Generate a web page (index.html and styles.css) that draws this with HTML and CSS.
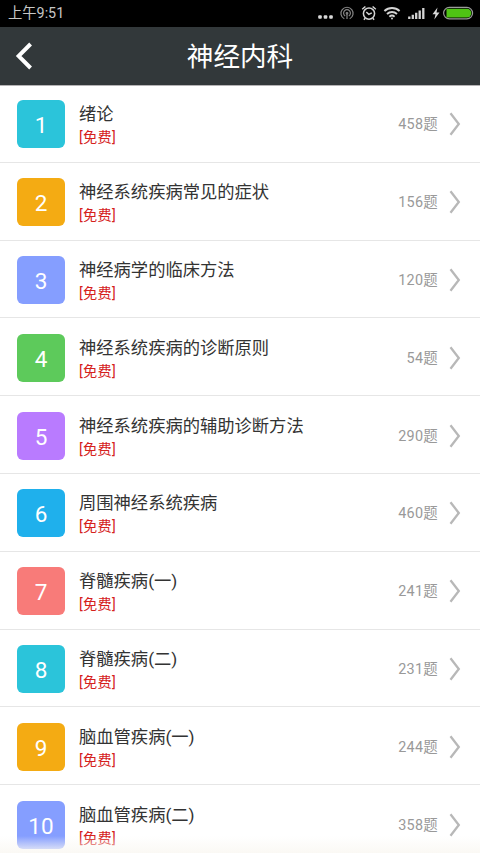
FILE: index.html
```html
<!DOCTYPE html>
<html lang="zh-CN">
<head>
<meta charset="utf-8">
<title>神经内科</title>
<link rel="stylesheet" href="styles.css">
</head>
<body>
<div class="status">
  <span class="time">上午9:51</span>
  <svg class="status-icons" width="164" height="27" viewBox="0 0 164 27" fill="none" stroke="#d4d4d4">
    <g fill="#d8d8d8" stroke="none"><rect x="2.2" y="15.3" width="3.6" height="3.4" rx="1"/><rect x="7.7" y="15.3" width="3.6" height="3.4" rx="1"/><rect x="13.2" y="15.3" width="3.6" height="3.4" rx="1"/></g>
    <g stroke="#858585" stroke-width="1.2"><path d="M28.3 18.8a6.1 6.1 0 1 1 5.4 0"/><path d="M29.2 16a3.4 3.4 0 1 1 3.6 0"/><circle cx="31" cy="13.3" r=".8"/><path d="M31 14v5"/></g>
    <g stroke-width="1.5"><circle cx="53" cy="13.6" r="5.6"/><path d="M50.3 12l2.5 2.4 3-1.6M46.2 9.2l3.2-2.7M59.8 9.2l-3.2-2.7M49.2 18.2l-1.3 1.6M56.8 18.2l1.3 1.6"/></g>
    <g stroke-width="1.9"><path d="M68.4 11a11.2 11.2 0 0 1 15.2 0M71 14a7.4 7.4 0 0 1 10 0M73.4 16.7a4 4 0 0 1 5.2 0"/><circle cx="76" cy="18.6" r="1" fill="#d4d4d4" stroke="none"/></g>
    <path stroke-width="2.3" d="M93.3 19v-2.6M96.8 19v-4.3M100.2 19v-6.2M103.7 19v-8.5M107.3 19V8"/>
    <path fill="#d8d8d8" stroke="none" d="M121.5 7.5l-5 6.7h3l-1.2 5.4 5.2-7h-3z"/>
    <rect x="127.6" y="7.4" width="29" height="11.4" rx="5.7" stroke="#9b9b9b" stroke-width="1.2"/>
    <path fill="#4fc414" stroke="none" d="M130.5 8.8H151a4.3 4.3 0 0 1 0 8.6H130.5z"/>
  </svg>
</div>
<header class="header">
  <svg class="back" width="18" height="28" viewBox="0 0 18 28"><path d="M16.6 2L4.6 14l12 12" fill="none" stroke="#fff" stroke-width="3.9"/></svg>
  <h1>神经内科</h1>
</header>
<ul class="list" id="list"></ul>
<div class="fade"></div>
<script src="app.js"></script>
</body>
</html>
```
FILE: styles.css
```css
* { box-sizing: border-box; }
body {
  margin: 0;
  height: 853px;
  overflow: hidden;
  display: flex;
  flex-direction: column;
  position: relative;
  background: #fff;
  font-family: Roboto, "Noto Sans CJK SC", sans-serif;
}
.status {
  flex: none;
  height: 27px;
  background: #000;
  display: flex;
  align-items: center;
  justify-content: space-between;
  padding: 0 0 0 8px;
}
.time {
  color: #c6c6c6;
  font: 14.3px/27px Roboto, "Noto Sans CJK SC", sans-serif;
}
.header {
  flex: none;
  height: 58px;
  background: #32383a;
  display: grid;
  grid-template-columns: 80px 1fr 80px;
  align-items: center;
}
.back { margin-left: 14px; }
h1 {
  margin: 0;
  padding-bottom: 2px;
  color: #fff;
  text-align: center;
  font: 400 26.6px/56px "Noto Sans CJK SC", sans-serif;
}
.list {
  flex: none;
  list-style: none;
  margin: 0;
  padding: 0;
  box-shadow: inset 0 1px #b5b3b5;
}
.row {
  height: 77.8px;
  padding: 2px 19px 0 17px;
  display: flex;
  align-items: center;
  border-bottom: 1px solid #e6e6e6;
}
.tile {
  width: 48px;
  height: 48px;
  flex: none;
  border-radius: 6px;
  color: #fff;
  font-size: 22.5px;
  font-weight: 400;
  line-height: 51px;
  text-align: center;
}
.cyan { background: #2bc4da; }
.orange { background: #f4ab13; }
.indigo { background: #859eff; }
.green { background: #5dca5b; }
.purple { background: #b97bff; }
.blue { background: #1fb0ec; }
.coral { background: #f87b79; }
.text {
  flex: 1;
  margin-left: 14px;
  padding-top: 2px;
}
.name {
  color: #333;
  font-size: 17.3px;
  line-height: 24px;
}
.free {
  color: #d5211c;
  font-size: 14.2px;
  letter-spacing: .3px;
  line-height: 22px;
}
.count {
  color: #999;
  font-size: 14.4px;
  letter-spacing: .3px;
  line-height: 20px;
  margin: 2px 11px 0 0;
}
.chevron { flex: none; }
.fade {
  position: absolute;
  left: 0;
  right: 0;
  bottom: 0;
  height: 17px;
  background: linear-gradient(rgba(250, 248, 243, 0), rgba(250, 248, 243, .9));
}
```
FILE: app.js
```js
const chapters = [
  ["绪论", 458, "cyan"],
  ["神经系统疾病常见的症状", 156, "orange"],
  ["神经病学的临床方法", 120, "indigo"],
  ["神经系统疾病的诊断原则", 54, "green"],
  ["神经系统疾病的辅助诊断方法", 290, "purple"],
  ["周围神经系统疾病", 460, "blue"],
  ["脊髓疾病(一)", 241, "coral"],
  ["脊髓疾病(二)", 231, "cyan"],
  ["脑血管疾病(一)", 244, "orange"],
  ["脑血管疾病(二)", 358, "indigo"]
];

document.getElementById("list").innerHTML = chapters.map(([name, count, color], i) => `
  <li class="row">
    <div class="tile ${color}">${i + 1}</div>
    <div class="text">
      <div class="name">${name}</div>
      <div class="free">[免费]</div>
    </div>
    <span class="count">${count}题</span>
    <svg class="chevron" width="12" height="24" viewBox="0 0 12 24"><path d="M1.5 1.2L9.8 12 1.5 22.8" fill="none" stroke="#b8b8b8" stroke-width="2.3"/></svg>
  </li>`).join("");
```
